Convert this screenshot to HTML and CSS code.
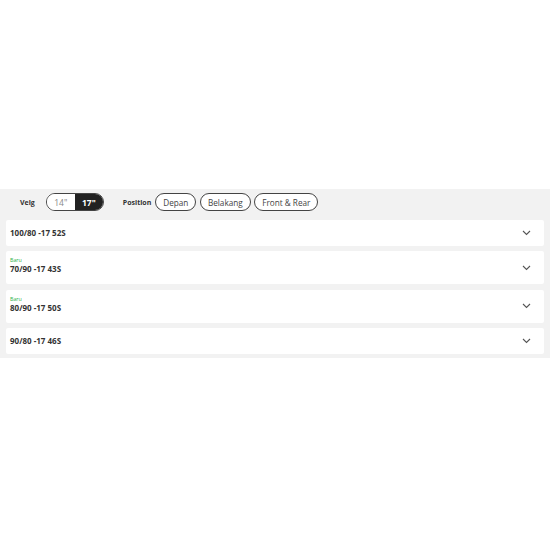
FILE: index.html
```html
<!DOCTYPE html>
<html>
<head>
<meta charset="utf-8">
<link rel="stylesheet" href="styles.css">
</head>
<body>
<div class="spacer"></div>
<section class="panel">
  <div class="filters">
    <span class="label velg">Velg</span>
    <div class="seg">
      <span class="seg-item">14"</span>
      <span class="seg-item active">17"</span>
    </div>
    <span class="label pos">Position</span>
    <div class="pills">
      <span class="pill">Depan</span>
      <span class="pill">Belakang</span>
      <span class="pill">Front &amp; Rear</span>
    </div>
  </div>
  <div class="list">
    <div class="card short">
      <div class="info"><div class="size">100/80 -17 52S</div></div>
      <svg class="chev" width="9" height="6" viewBox="0 0 9 6"><path d="M1 1l3.5 3.5L8 1" fill="none" stroke="#555" stroke-width="1.1"/></svg>
    </div>
    <div class="card tall">
      <div class="info"><div class="tag">Baru</div><div class="size">70/90 -17 43S</div></div>
      <svg class="chev" width="9" height="6" viewBox="0 0 9 6"><path d="M1 1l3.5 3.5L8 1" fill="none" stroke="#555" stroke-width="1.1"/></svg>
    </div>
    <div class="card tall">
      <div class="info"><div class="tag">Baru</div><div class="size">80/90 -17 50S</div></div>
      <svg class="chev" width="9" height="6" viewBox="0 0 9 6"><path d="M1 1l3.5 3.5L8 1" fill="none" stroke="#555" stroke-width="1.1"/></svg>
    </div>
    <div class="card short">
      <div class="info"><div class="size">90/80 -17 46S</div></div>
      <svg class="chev" width="9" height="6" viewBox="0 0 9 6"><path d="M1 1l3.5 3.5L8 1" fill="none" stroke="#555" stroke-width="1.1"/></svg>
    </div>
  </div>
</section>
</body>
</html>
```
FILE: styles.css
```css
html, body { margin: 0; padding: 0; background: #fff; }
body { font-family: "Open Sans", "Noto Sans", sans-serif; color: #333; }
.spacer { height: 189px; }
.panel { background: #f2f2f2; padding: 4px 6px 4px 6px; }
.filters { display: flex; align-items: center; height: 18px; margin-bottom: 9px; }
.label { font-size: 7px; font-weight: 700; color: #333; }
.velg { margin-left: 14px; margin-right: 11px; }
.seg { display: flex; height: 18px; box-sizing: border-box; border: 1px solid #444; border-radius: 9px; overflow: hidden; }
.seg-item { width: 28px; display: flex; align-items: center; justify-content: center; font-size: 8.5px; color: #888; background: #fff; }
.seg-item.active { background: #222; color: #fff; font-weight: 700; }
.pos { margin-left: 19px; margin-right: 4px; }
.pills { display: flex; gap: 3.5px; }
.pill { height: 18px; box-sizing: border-box; border: 1px solid #444; border-radius: 9px; padding: 0 7px; display: flex; align-items: center; font-size: 8.2px; color: #444; background: #fff; }
.list { display: flex; flex-direction: column; gap: 5.5px; }
.card { background: #fff; border-radius: 2px; display: flex; align-items: center; justify-content: space-between; padding: 0 13px 0 4px; }
.card.short { height: 25.5px; }
.card.tall { height: 33px; }
.card.tall .info { padding-bottom: 4px; }
.tag { font-size: 5.3px; color: #2bb24c; line-height: 6px; margin-bottom: 1px; }
.size { font-size: 8px; font-weight: 700; color: #333; line-height: 10px; }
.chev { display: block; }
```
